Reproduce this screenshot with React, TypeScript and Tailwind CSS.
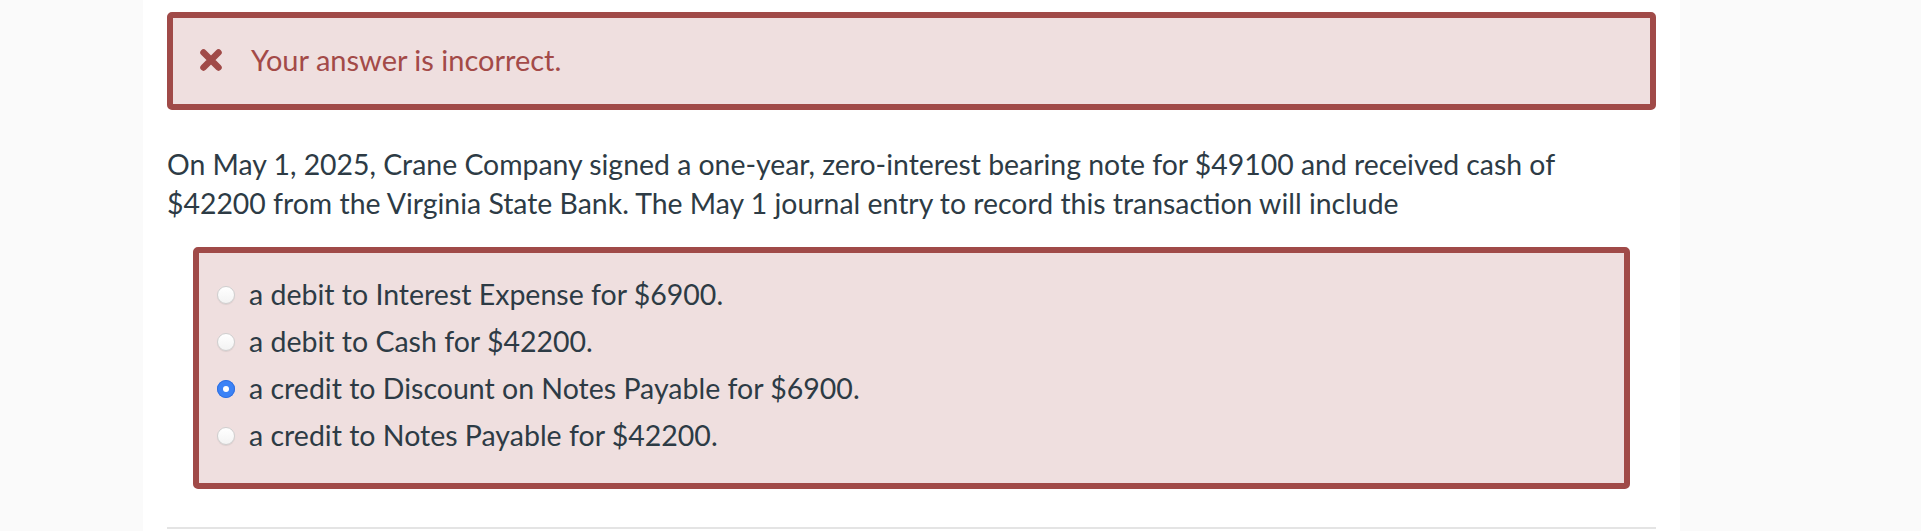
import React from "react";

const options = [
  { label: "a debit to Interest Expense for $6900.", checked: false },
  { label: "a debit to Cash for $42200.", checked: false },
  { label: "a credit to Discount on Notes Payable for $6900.", checked: true },
  { label: "a credit to Notes Payable for $42200.", checked: false },
];

function Radio({ checked }: { checked: boolean }) {
  if (checked) {
    return (
      <span className="flex h-[18px] w-[18px] shrink-0 items-center justify-center rounded-full bg-[#3b82f6] shadow-[inset_0_0_0_1px_#2f6fe0]">
        <span className="h-[6px] w-[6px] rounded-full bg-white" />
      </span>
    );
  }
  return (
    <span className="h-[18px] w-[18px] shrink-0 rounded-full border border-[#cfcfcf] bg-gradient-to-b from-white to-[#f3f3f3] shadow-[0_1px_1px_rgba(0,0,0,0.08)]" />
  );
}

export default function App() {
  return (
    <div
      className="flex h-[531px] w-[1921px] overflow-hidden bg-white"
      style={{ fontFamily: "Lato, 'Open Sans', 'Liberation Sans', sans-serif" }}
    >
      <div className="w-[143px] shrink-0 bg-[#fafafa]" />
      <div className="flex flex-1 flex-col px-[24px]">
        <div className="mt-[12px] flex h-[98px] items-center rounded-[5px] border-[6px] border-[#a04a48] bg-[#efdfdf] pb-[3px] pl-[26px]">
          <svg width="24" height="24" viewBox="0 0 24 24" className="shrink-0">
            <path
              d="M4.5 4.5 L19.5 19.5 M19.5 4.5 L4.5 19.5"
              stroke="#a04a48"
              strokeWidth="6.5"
              strokeLinecap="round"
              fill="none"
            />
          </svg>
          <span className="ml-[28px] text-[29px] leading-none text-[#a34a48]">
            Your answer is incorrect.
          </span>
        </div>

        <p className="mt-[35px] text-[28.4px] leading-[39px] text-[#2d3b45]">
          On May 1, 2025, Crane Company signed a one-year, zero-interest bearing note for $49100 and received cash of
          <br />
          $42200 from the Virginia State Bank. The May 1 journal entry to record this transaction will include
        </p>

        <div className="mx-[26px] mt-[24px] h-[242px] rounded-[5px] border-[6px] border-[#a04a48] bg-[#efdfdf] pl-[18px] pt-[18px]">
          {options.map((o) => (
            <label key={o.label} className="flex h-[47px] items-center gap-[14px] text-[28.5px] text-[#2d3b45]">
              <Radio checked={o.checked} />
              <span className="leading-none">{o.label}</span>
            </label>
          ))}
        </div>

        <div className="mt-[38px] border-t-2 border-[#e4e4e4]" />
      </div>
      <div className="w-[241px] shrink-0 bg-[#fafafa]" />
    </div>
  );
}
